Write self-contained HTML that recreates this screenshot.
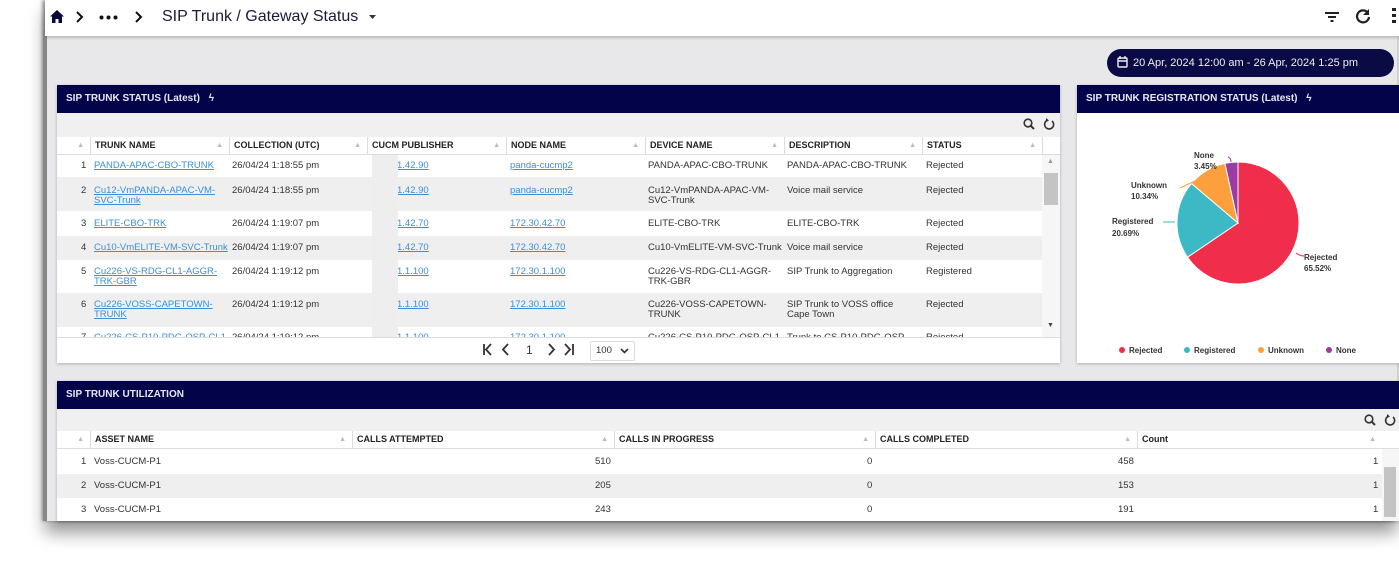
<!DOCTYPE html>
<html><head><meta charset="utf-8"><style>
*{margin:0;padding:0;box-sizing:border-box}
body{width:1399px;height:561px;background:#fff;font-family:"Liberation Sans",sans-serif;position:relative;overflow:hidden;color:#333}
.a{position:absolute}
.frame{left:45px;top:0;width:1352px;height:521px;background:#e8e8ea;box-shadow:0 12px 16px rgba(0,0,0,.4), -3px 0 3px rgba(0,0,0,.35)}
.top{left:45px;top:0;width:1354px;height:36px;background:#fff;box-shadow:0 2px 3px rgba(0,0,0,.2)}
.hd{background:#03034a;color:#e8e8f4;font-size:10px;font-weight:bold;padding-left:9px;line-height:28px}
.panel{background:#fff;box-shadow:0 1px 3px rgba(0,0,0,.25)}
.tb{background:#f0f0f0}
.th{font-size:9px;font-weight:bold;color:#222;background:#fff;border-bottom:1px solid #ddd}
.th div{position:absolute;top:0;height:17px;line-height:17px;border-left:1px solid #ddd;padding-left:4px}
.th span{position:absolute;right:6px;top:0;color:#bbb;font-size:7px}
.cell{position:absolute;font-size:9.5px;color:#333;line-height:10px}
.lnk{color:#3a8fd6;text-decoration:underline}
.row{position:absolute;left:0;right:0}
</style></head><body>
<div class="a frame"></div>
<div class="a" style="left:43px;top:30px;width:4px;height:491px;background:#888"></div>
<div class="a top"></div>
<!-- breadcrumb -->
<svg class="a" style="left:50px;top:10px" width="14" height="13" viewBox="0 0 14 13"><path d="M7 0L0 6.5h2V13h3.5V9h3v4H12V6.5h2z" fill="#0a0a3a"/></svg>
<svg class="a" style="left:75px;top:11px" width="10" height="12"><path d="M2 1l5 5-5 5" stroke="#111" stroke-width="2" fill="none"/></svg>
<svg class="a" style="left:99px;top:15px" width="20" height="5"><circle cx="2.5" cy="2.5" r="2" fill="#111"/><circle cx="9.5" cy="2.5" r="2" fill="#111"/><circle cx="16.5" cy="2.5" r="2" fill="#111"/></svg>
<svg class="a" style="left:134px;top:11px" width="10" height="12"><path d="M2 1l5 5-5 5" stroke="#111" stroke-width="2" fill="none"/></svg>
<div class="a" style="left:162px;top:8px;font-size:16px;color:#1a1a3a">SIP Trunk / Gateway Status</div>
<svg class="a" style="left:369px;top:15px" width="8" height="5"><path d="M0 0h7L3.5 4z" fill="#333"/></svg>
<svg class="a" style="left:1324px;top:10px" width="16" height="14"><path d="M1 3h14M4 7h8M6.5 11h3" stroke="#222" stroke-width="2"/></svg>
<svg class="a" style="left:1355px;top:8px" width="16" height="16" viewBox="0 0 16 16"><path d="M13 5A6 6 0 1 0 14 9" stroke="#222" stroke-width="2.2" fill="none"/><path d="M14 1v6H8z" fill="#222"/></svg>
<div class="a" style="left:1392px;top:8px;width:4px;height:16px;background:linear-gradient(#222 0 3px,transparent 3px 6px,#222 6px 9px,transparent 9px 12px,#222 12px 15px,transparent 15px)"></div>
<!-- date pill -->
<div class="a" style="left:1107px;top:49px;width:287px;height:28px;background:#0a0a45;border-radius:14px;color:#eee;font-size:11px;line-height:28px;padding-left:26px">20 Apr, 2024 12:00 am - 26 Apr, 2024 1:25 pm</div>
<svg class="a" style="left:1117px;top:56px" width="11" height="12"><rect x="1" y="2" width="9" height="9" rx="1" stroke="#eee" fill="none" stroke-width="1.4"/><path d="M1 5h9M3 0v3M8 0v3" stroke="#eee" stroke-width="1.4"/></svg>

<!-- left panel -->
<div class="a panel" style="left:57px;top:85px;width:1003px;height:278px">
 <div class="hd" style="height:28px">SIP TRUNK STATUS (Latest) <span style="margin-left:6px">ϟ</span></div>
 <div class="tb" style="height:24px"></div>
 <div class="th a" style="top:52px;left:0;width:1003px;height:18px">
  <div style="left:0;width:33px;border:0"><span style="right:6px">▲</span></div>
  <div style="left:33px;width:139px">TRUNK NAME<span>▲</span></div>
  <div style="left:172px;width:138px">COLLECTION (UTC)<span>▲</span></div>
  <div style="left:310px;width:139px">CUCM PUBLISHER<span>▲</span></div>
  <div style="left:449px;width:139px">NODE NAME<span>▲</span></div>
  <div style="left:588px;width:139px">DEVICE NAME<span>▲</span></div>
  <div style="left:727px;width:138px">DESCRIPTION<span>▲</span></div>
  <div style="left:865px;width:120px">STATUS<span>▲</span></div>
  <div style="left:985px;width:18px"></div>
 </div>
 <div class="a" style="top:70px;left:0;width:985px;height:182px;overflow:hidden">
  <div class="row" style="top:0;height:22px;background:#fff"></div>
  <div class="row" style="top:22px;height:34px;background:#efefef"></div>
  <div class="row" style="top:56px;height:25px;background:#fff"></div>
  <div class="row" style="top:81px;height:24px;background:#efefef"></div>
  <div class="row" style="top:105px;height:33px;background:#fff"></div>
  <div class="row" style="top:138px;height:34px;background:#efefef"></div>
  <div class="row" style="top:172px;height:20px;background:#fff"></div>
  <!-- rows -->
  <div class="cell" style="left:24px;top:6px">1</div><div class="cell lnk" style="left:37px;top:6px">PANDA-APAC-CBO-TRUNK</div><div class="cell" style="left:175px;top:6px">26/04/24 1:18:55 pm</div><div class="cell lnk" style="left:340px;top:6px">1.42.90</div><div class="cell lnk" style="left:453px;top:6px">panda-cucmp2</div><div class="cell" style="left:591px;top:6px">PANDA-APAC-CBO-TRUNK</div><div class="cell" style="left:730px;top:6px">PANDA-APAC-CBO-TRUNK</div><div class="cell" style="left:869px;top:6px">Rejected</div>
  <div class="cell" style="left:24px;top:31px">2</div><div class="cell lnk" style="left:37px;top:31px;width:130px">Cu12-VmPANDA-APAC-VM-SVC-Trunk</div><div class="cell" style="left:175px;top:31px">26/04/24 1:18:55 pm</div><div class="cell lnk" style="left:340px;top:31px">1.42.90</div><div class="cell lnk" style="left:453px;top:31px">panda-cucmp2</div><div class="cell" style="left:591px;top:31px;width:130px">Cu12-VmPANDA-APAC-VM-SVC-Trunk</div><div class="cell" style="left:730px;top:31px">Voice mail service</div><div class="cell" style="left:869px;top:31px">Rejected</div>
  <div class="cell" style="left:24px;top:64px">3</div><div class="cell lnk" style="left:37px;top:64px">ELITE-CBO-TRK</div><div class="cell" style="left:175px;top:64px">26/04/24 1:19:07 pm</div><div class="cell lnk" style="left:340px;top:64px">1.42.70</div><div class="cell lnk" style="left:453px;top:64px">172.30.42.70</div><div class="cell" style="left:591px;top:64px">ELITE-CBO-TRK</div><div class="cell" style="left:730px;top:64px">ELITE-CBO-TRK</div><div class="cell" style="left:869px;top:64px">Rejected</div>
  <div class="cell" style="left:24px;top:88px">4</div><div class="cell lnk" style="left:37px;top:88px">Cu10-VmELITE-VM-SVC-Trunk</div><div class="cell" style="left:175px;top:88px">26/04/24 1:19:07 pm</div><div class="cell lnk" style="left:340px;top:88px">1.42.70</div><div class="cell lnk" style="left:453px;top:88px">172.30.42.70</div><div class="cell" style="left:591px;top:88px">Cu10-VmELITE-VM-SVC-Trunk</div><div class="cell" style="left:730px;top:88px">Voice mail service</div><div class="cell" style="left:869px;top:88px">Rejected</div>
  <div class="cell" style="left:24px;top:112px">5</div><div class="cell lnk" style="left:37px;top:112px;width:130px">Cu226-VS-RDG-CL1-AGGR-TRK-GBR</div><div class="cell" style="left:175px;top:112px">26/04/24 1:19:12 pm</div><div class="cell lnk" style="left:340px;top:112px">1.1.100</div><div class="cell lnk" style="left:453px;top:112px">172.30.1.100</div><div class="cell" style="left:591px;top:112px;width:130px">Cu226-VS-RDG-CL1-AGGR-TRK-GBR</div><div class="cell" style="left:730px;top:112px">SIP Trunk to Aggregation</div><div class="cell" style="left:869px;top:112px">Registered</div>
  <div class="cell" style="left:24px;top:145px">6</div><div class="cell lnk" style="left:37px;top:145px;width:130px">Cu226-VOSS-CAPETOWN-TRUNK</div><div class="cell" style="left:175px;top:145px">26/04/24 1:19:12 pm</div><div class="cell lnk" style="left:340px;top:145px">1.1.100</div><div class="cell lnk" style="left:453px;top:145px">172.30.1.100</div><div class="cell" style="left:591px;top:145px;width:125px">Cu226-VOSS-CAPETOWN-TRUNK</div><div class="cell" style="left:730px;top:145px;width:125px">SIP Trunk to VOSS office Cape Town</div><div class="cell" style="left:869px;top:145px">Rejected</div>
  <div class="cell" style="left:24px;top:178px">7</div><div class="cell lnk" style="left:37px;top:178px">Cu226-CS-P10-PDG-OSP-CL1</div><div class="cell" style="left:175px;top:178px">26/04/24 1:19:12 pm</div><div class="cell lnk" style="left:340px;top:178px">1.1.100</div><div class="cell lnk" style="left:453px;top:178px">172.30.1.100</div><div class="cell" style="left:591px;top:178px">Cu226-CS-P10-PDG-OSP-CL1</div><div class="cell" style="left:730px;top:178px">Trunk to CS-P10-PDG-OSP</div><div class="cell" style="left:869px;top:178px">Rejected</div>
  <div class="a" style="left:315px;top:0;width:26px;height:182px;background:#eeeeee"></div>
 </div>
 <div class="a" style="left:985px;top:70px;width:18px;height:182px;background:#f6f6f6"><div class="a" style="left:2px;top:18px;width:14px;height:32px;background:#c4c4c4"></div><div class="a" style="left:5px;top:3px;font-size:7px;color:#999">▲</div><div class="a" style="left:5px;top:167px;font-size:7px;color:#444">▼</div></div>
 <svg class="a" style="left:966px;top:33px" width="12" height="12"><circle cx="5" cy="5" r="3.8" stroke="#333" stroke-width="1.6" fill="none"/><path d="M7.8 7.8L11 11" stroke="#333" stroke-width="2"/></svg>
 <svg class="a" style="left:986px;top:32px" width="12" height="13"><path d="M9 4A4.5 4.5 0 1 1 4 3.5" stroke="#333" stroke-width="1.6" fill="none"/><path d="M3 1l3 2.5-3 1.5z" fill="#333"/></svg>
 <div class="a" style="left:0;top:252px;width:1003px;height:1px;background:#ddd"></div>
 <svg class="a" style="left:425px;top:258px" width="100" height="13">
  <g stroke="#333" stroke-width="1.8" fill="none"><path d="M2 1v11M9 1l-5 5.5 5 5.5"/><path d="M26 1l-5 5.5 5 5.5"/><path d="M67 1l5 5.5-5 5.5"/><path d="M83 1l5 5.5-5 5.5M91 1v11"/></g>
  <text x="44" y="11" font-size="12" fill="#333" font-family="Liberation Sans">1</text>
 </svg>
 <div class="a" style="left:533px;top:256px;width:45px;height:20px;border:1px solid #ddd;border-radius:2px;font-size:9.5px;line-height:18px;padding-left:5px">100</div>
 <svg class="a" style="left:563px;top:263px" width="9" height="6"><path d="M1 1l3.5 3.5L8 1" stroke="#333" stroke-width="1.6" fill="none"/></svg>
</div>

<!-- right panel -->
<div class="a panel" style="left:1077px;top:85px;width:322px;height:278px">
 <div class="hd" style="height:28px">SIP TRUNK REGISTRATION STATUS (Latest) <span style="margin-left:6px">ϟ</span></div>
</div>
<svg class="a" style="left:1077px;top:113px" width="322" height="250">
 <g transform="translate(-1077,-113)">
  <path d="M1238 223L1238 162A61 61 0 1 1 1187.5 257.2Z" fill="#f02d4b" stroke="#fff" stroke-width="1"/>
  <path d="M1238 223L1187.5 257.2A61 61 0 0 1 1191.5 183.5Z" fill="#3cb9c4" stroke="#fff" stroke-width="1"/>
  <path d="M1238 223L1191.5 183.5A61 61 0 0 1 1224.9 163.4Z" fill="#fc9f3c" stroke="#fff" stroke-width="1"/>
  <path d="M1238 223L1224.9 163.4A61 61 0 0 1 1238 162Z" fill="#9b3ba3" stroke="#fff" stroke-width="1"/>
  <path d="M1296 253q4 3 8 3" stroke="#f02d4b" fill="none"/>
  <path d="M1175 222h-12" stroke="#3cb9c4" fill="none"/>
  <path d="M1195 181l-15 7" stroke="#fc9f3c" fill="none"/>
  <path d="M1231 162q0-4-3-5" stroke="#9b3ba3" fill="none"/>
  <g font-size="8" font-weight="bold" fill="#333" font-family="Liberation Sans">
   <text x="1304" y="260">Rejected</text><text x="1304" y="271">65.52%</text>
   <text x="1112" y="224">Registered</text><text x="1112" y="236">20.69%</text>
   <text x="1131" y="188">Unknown</text><text x="1131" y="199">10.34%</text>
   <text x="1194" y="158">None</text><text x="1194" y="169">3.45%</text>
   <circle cx="1122" cy="350" r="3" fill="#f02d4b"/><text x="1129" y="353">Rejected</text>
   <circle cx="1187" cy="350" r="3" fill="#3cb9c4"/><text x="1194" y="353">Registered</text>
   <circle cx="1261" cy="350" r="3" fill="#fc9f3c"/><text x="1268" y="353">Unknown</text>
   <circle cx="1329" cy="350" r="3" fill="#9b3ba3"/><text x="1336" y="353">None</text>
  </g>
 </g>
</svg>

<!-- bottom panel -->
<div class="a panel" style="left:57px;top:381px;width:1342px;height:140px;overflow:hidden">
 <div class="hd" style="height:28px">SIP TRUNK UTILIZATION</div>
 <div class="tb" style="height:22px"></div>
 <div class="th a" style="top:50px;left:0;width:1342px;height:18px">
  <div style="left:0;width:33px;border:0"><span>▲</span></div>
  <div style="left:33px;width:262px">ASSET NAME<span>▲</span></div>
  <div style="left:295px;width:262px">CALLS ATTEMPTED<span>▲</span></div>
  <div style="left:557px;width:261px">CALLS IN PROGRESS<span>▲</span></div>
  <div style="left:818px;width:262px">CALLS COMPLETED<span>▲</span></div>
  <div style="left:1080px;width:245px">Count<span>▲</span></div>
 </div>
 <div class="a" style="top:68px;left:0;width:1325px;height:25px;background:#fff"></div>
 <div class="a" style="top:93px;left:0;width:1325px;height:24px;background:#efefef"></div>
 <div class="a" style="top:117px;left:0;width:1325px;height:23px;background:#fff"></div>
 <div class="a" style="left:1325px;top:68px;width:17px;height:72px;background:#f6f6f6"><div class="a" style="left:2px;top:18px;width:12px;height:50px;background:#c4c4c4"></div></div>
 <div class="cell" style="left:24px;top:76px">1</div><div class="cell" style="left:37px;top:76px">Voss-CUCM-P1</div><div class="cell" style="left:538px;top:76px">510</div><div class="cell" style="left:810px;top:76px">0</div><div class="cell" style="left:1061px;top:76px">458</div><div class="cell" style="left:1316px;top:76px">1</div>
 <div class="cell" style="left:24px;top:100px">2</div><div class="cell" style="left:37px;top:100px">Voss-CUCM-P1</div><div class="cell" style="left:538px;top:100px">205</div><div class="cell" style="left:810px;top:100px">0</div><div class="cell" style="left:1061px;top:100px">153</div><div class="cell" style="left:1316px;top:100px">1</div>
 <div class="cell" style="left:24px;top:124px">3</div><div class="cell" style="left:37px;top:124px">Voss-CUCM-P1</div><div class="cell" style="left:538px;top:124px">243</div><div class="cell" style="left:810px;top:124px">0</div><div class="cell" style="left:1061px;top:124px">191</div><div class="cell" style="left:1316px;top:124px">1</div>
 <svg class="a" style="left:1307px;top:33px" width="12" height="12"><circle cx="5" cy="5" r="3.8" stroke="#333" stroke-width="1.6" fill="none"/><path d="M7.8 7.8L11 11" stroke="#333" stroke-width="2"/></svg>
 <svg class="a" style="left:1327px;top:32px" width="12" height="13"><path d="M9 4A4.5 4.5 0 1 1 4 3.5" stroke="#333" stroke-width="1.6" fill="none"/><path d="M3 1l3 2.5-3 1.5z" fill="#333"/></svg>
</div>
</body></html>
